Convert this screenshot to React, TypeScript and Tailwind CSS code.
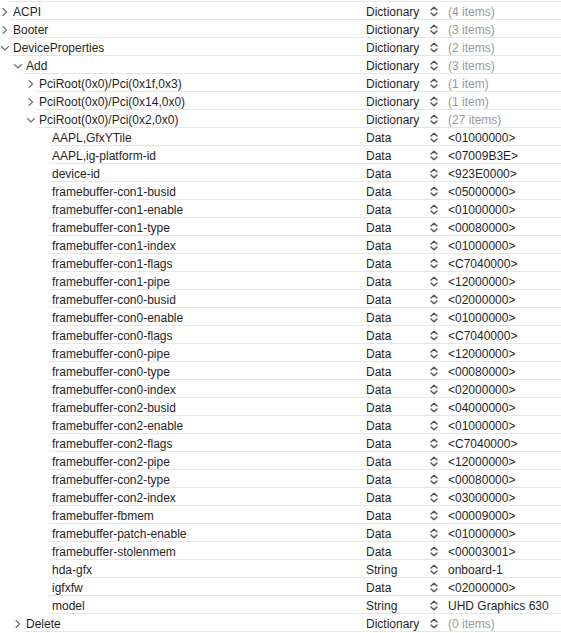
import React from 'react';

type Row = {
  name: string;
  type: string;
  value: string;
  level: number;
  toggle?: 'open' | 'closed';
};

const leaf = (name: string, value: string, type = 'Data'): Row => ({ name, type, value, level: 3 });

const rows: Row[] = [
  { name: 'ACPI', type: 'Dictionary', value: '(4 items)', level: 0, toggle: 'closed' },
  { name: 'Booter', type: 'Dictionary', value: '(3 items)', level: 0, toggle: 'closed' },
  { name: 'DeviceProperties', type: 'Dictionary', value: '(2 items)', level: 0, toggle: 'open' },
  { name: 'Add', type: 'Dictionary', value: '(3 items)', level: 1, toggle: 'open' },
  { name: 'PciRoot(0x0)/Pci(0x1f,0x3)', type: 'Dictionary', value: '(1 item)', level: 2, toggle: 'closed' },
  { name: 'PciRoot(0x0)/Pci(0x14,0x0)', type: 'Dictionary', value: '(1 item)', level: 2, toggle: 'closed' },
  { name: 'PciRoot(0x0)/Pci(0x2,0x0)', type: 'Dictionary', value: '(27 items)', level: 2, toggle: 'open' },
  leaf('AAPL,GfxYTile', '<01000000>'),
  leaf('AAPL,ig-platform-id', '<07009B3E>'),
  leaf('device-id', '<923E0000>'),
  leaf('framebuffer-con1-busid', '<05000000>'),
  leaf('framebuffer-con1-enable', '<01000000>'),
  leaf('framebuffer-con1-type', '<00080000>'),
  leaf('framebuffer-con1-index', '<01000000>'),
  leaf('framebuffer-con1-flags', '<C7040000>'),
  leaf('framebuffer-con1-pipe', '<12000000>'),
  leaf('framebuffer-con0-busid', '<02000000>'),
  leaf('framebuffer-con0-enable', '<01000000>'),
  leaf('framebuffer-con0-flags', '<C7040000>'),
  leaf('framebuffer-con0-pipe', '<12000000>'),
  leaf('framebuffer-con0-type', '<00080000>'),
  leaf('framebuffer-con0-index', '<02000000>'),
  leaf('framebuffer-con2-busid', '<04000000>'),
  leaf('framebuffer-con2-enable', '<01000000>'),
  leaf('framebuffer-con2-flags', '<C7040000>'),
  leaf('framebuffer-con2-pipe', '<12000000>'),
  leaf('framebuffer-con2-type', '<00080000>'),
  leaf('framebuffer-con2-index', '<03000000>'),
  leaf('framebuffer-fbmem', '<00009000>'),
  leaf('framebuffer-patch-enable', '<01000000>'),
  leaf('framebuffer-stolenmem', '<00003001>'),
  leaf('hda-gfx', 'onboard-1', 'String'),
  leaf('igfxfw', '<02000000>'),
  leaf('model', 'UHD Graphics 630', 'String'),
  { name: 'Delete', type: 'Dictionary', value: '(0 items)', level: 1, toggle: 'closed' },
];

const indent = ['w-0', 'w-[13px]', 'w-[26px]', 'w-[39px]'];

const Chevron = ({ open }: { open: boolean }) => (
  <svg width="10" height="10" viewBox="0 0 10 10" className="text-[#6e6e6e]">
    {open ? (
      <path d="M1.5 3.5 L5 7 L8.5 3.5" fill="none" stroke="currentColor" strokeWidth="1.1" strokeLinecap="round" strokeLinejoin="round" />
    ) : (
      <path d="M3 1.5 L6.5 5 L3 8.5" fill="none" stroke="currentColor" strokeWidth="1.1" strokeLinecap="round" strokeLinejoin="round" />
    )}
  </svg>
);

const Stepper = () => (
  <svg width="8" height="11" viewBox="0 0 8 11" className="text-[#4a4a4a]">
    <path d="M1 4 L4 1.2 L7 4" fill="none" stroke="currentColor" strokeWidth="1.3" strokeLinecap="round" strokeLinejoin="round" />
    <path d="M1 7 L4 9.8 L7 7" fill="none" stroke="currentColor" strokeWidth="1.3" strokeLinecap="round" strokeLinejoin="round" />
  </svg>
);

export default function App() {
  return (
    <div
      className="w-[561px] h-[633px] bg-white overflow-hidden text-[12px] text-[#1f1f1f]"
      style={{ fontFamily: '"Liberation Sans", Arial, sans-serif' }}
    >
      <div className="mt-px ml-[10px] h-px bg-[#e6e6e6]" />
      {rows.map((r, i) => (
        <div key={i} className="flex h-[18px]">
          <div className={`${indent[r.level]} shrink-0`} />
          <div className="w-[10px] shrink-0 flex items-center justify-center pt-[2px]">
            {r.toggle && <Chevron open={r.toggle === 'open'} />}
          </div>
          <div className="flex-1 flex items-center pt-[2px] border-b border-[#e6e6e6]">
            <div className="flex-1 pl-[3px] whitespace-nowrap">{r.name}</div>
            <div className="w-[62px] shrink-0">{r.type}</div>
            <div className="w-[20px] shrink-0 flex items-center pl-[2px]">
              <Stepper />
            </div>
            <div className={`w-[113px] shrink-0 whitespace-nowrap ${r.type === 'Dictionary' ? 'text-[#999999]' : ''}`}>
              {r.value}
            </div>
          </div>
        </div>
      ))}
    </div>
  );
}
